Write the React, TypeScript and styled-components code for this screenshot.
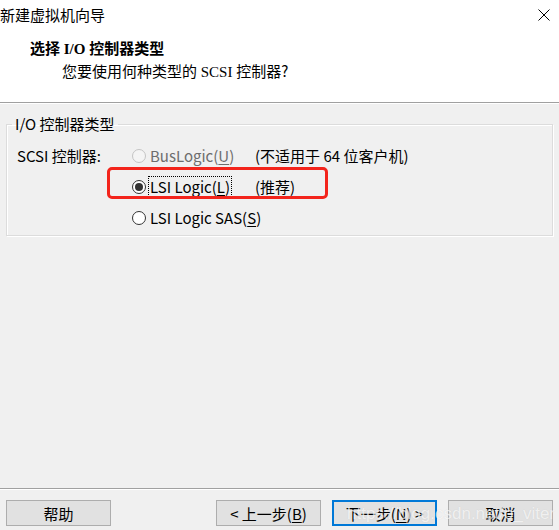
import React from 'react';
import styled, { createGlobalStyle } from 'styled-components';

const GlobalStyle = createGlobalStyle`
  html, body {
    margin: 0;
    padding: 0;
    background: #f0f0f0;
  }
  body {
    font-family: 'Noto Sans CJK SC', 'Noto Sans', sans-serif;
    font-size: 15px;
    color: #000;
  }
`;

const Window = styled.div`
  width: 559px;
  height: 530px;
  background: #f0f0f0;
  display: flex;
  flex-direction: column;
  overflow: hidden;
  position: relative;
`;

const Header = styled.header`
  background: #fff;
  height: 102px;
  border-bottom: 1px solid #a0a0a0;
  box-shadow: 0 1px 0 #fff;
  display: flex;
  flex-direction: column;
`;

const TitleBar = styled.div`
  height: 30px;
  display: flex;
  align-items: center;
  justify-content: space-between;
  padding: 0 9px 0 0;
  line-height: 20px;
`;

const CloseButton = styled.div`
  width: 12px;
  height: 12px;
  display: flex;
  svg {
    display: block;
  }
`;

const HeaderTitle = styled.div`
  margin: 9px 0 0 30px;
  font-family: 'Liberation Serif', 'Noto Sans CJK SC', serif;
  font-weight: 700;
  font-size: 15px;
  line-height: 20px;
`;

const HeaderSub = styled.div`
  margin: 2px 0 0 62px;
  font-family: 'Liberation Serif', 'Noto Sans CJK SC', serif;
  font-size: 15px;
  line-height: 20px;
  span {
    font-family: 'Noto Sans CJK SC', sans-serif;
  }
`;

const Content = styled.main`
  flex: 1;
  padding: 11px 6px 0 6px;
`;

const GroupBox = styled.fieldset`
  margin: 0;
  padding: 6px 0 2px 10px;
  border: 1px solid #dcdcdc;
  box-shadow: inset 1px 1px 0 #fff, 1px 1px 0 #fff;
  min-width: 0;
`;

const Legend = styled.legend`
  margin-left: -5px;
  padding: 0 3px;
  line-height: 20px;
`;

const Row = styled.div`
  position: relative;
  display: flex;
  align-items: center;
  height: 31px;
`;

const FieldLabel = styled.div`
  width: 115px;
  flex-shrink: 0;
`;

const Option = styled.div<{ $disabled?: boolean; $focused?: boolean }>`
  width: 123px;
  flex-shrink: 0;
  display: flex;
  align-items: center;
  color: ${p => (p.$disabled ? '#6d6d6d' : '#000')};
  label {
    margin-left: 3px;
    padding: 0 1px;
    line-height: 19px;
    outline: ${p => (p.$focused ? '1px dotted #000' : 'none')};
    white-space: nowrap;
  }
  u {
    text-underline-offset: 2px;
  }
`;

const RadioCircle = styled.span<{ $checked?: boolean; $disabled?: boolean }>`
  width: 12px;
  height: 12px;
  border-radius: 50%;
  border: 1px solid ${p => (p.$disabled ? '#c4c4c4' : '#333')};
  background: ${p => (p.$disabled ? '#f4f4f4' : '#fff')};
  display: flex;
  align-items: center;
  justify-content: center;
  flex-shrink: 0;
  &::after {
    content: '';
    display: ${p => (p.$checked ? 'block' : 'none')};
    width: 8px;
    height: 8px;
    border-radius: 50%;
    background: #333;
  }
`;

const Note = styled.div`
  white-space: nowrap;
`;

const Highlight = styled.div`
  position: absolute;
  left: 90px;
  top: -4px;
  width: 221px;
  height: 32px;
  box-sizing: border-box;
  border: 3px solid #f3241b;
  border-radius: 5px;
  pointer-events: none;
`;

const Footer = styled.footer`
  border-top: 1px solid #a0a0a0;
  box-shadow: inset 0 1px 0 #fff;
  height: 42px;
  padding: 11px 6px 0 6px;
  box-sizing: border-box;
  display: flex;
  gap: 11px;
`;

const Spacer = styled.div`
  flex: 1;
`;

const Button = styled.div<{ $default?: boolean }>`
  width: 105px;
  height: 26px;
  box-sizing: border-box;
  background: #e1e1e1;
  border: ${p => (p.$default ? '2px solid #0078d7' : '1px solid #adadad')};
  display: flex;
  align-items: center;
  justify-content: center;
  font-size: 15px;
  white-space: nowrap;
  u {
    text-underline-offset: 2px;
  }
`;

const Watermark = styled.div`
  position: absolute;
  right: 4px;
  bottom: 6px;
  font-family: 'Liberation Sans', Arial, sans-serif;
  font-size: 17px;
  color: rgba(255, 255, 255, 0.7);
  text-shadow: 0 0 1px rgba(120, 120, 120, 0.2);
  pointer-events: none;
  white-space: nowrap;
`;

export default function App() {
  return (
    <Window>
      <GlobalStyle />
      <Header>
        <TitleBar>
          <span>新建虚拟机向导</span>
          <CloseButton>
            <svg width="12" height="12" viewBox="0 0 12 12">
              <path d="M0.5 0.5 L11.5 11.5 M11.5 0.5 L0.5 11.5" stroke="#000" strokeWidth="1" fill="none" />
            </svg>
          </CloseButton>
        </TitleBar>
        <HeaderTitle>选择 I/O 控制器类型</HeaderTitle>
        <HeaderSub>
          您要使用何种类型的 SCSI 控制器<span>?</span>
        </HeaderSub>
      </Header>
      <Content>
        <GroupBox>
          <Legend>I/O 控制器类型</Legend>
          <Row>
            <FieldLabel>SCSI 控制器:</FieldLabel>
            <Option $disabled>
              <RadioCircle $disabled />
              <label>
                BusLogic(<u>U</u>)
              </label>
            </Option>
            <Note>(不适用于 64 位客户机)</Note>
          </Row>
          <Row>
            <FieldLabel />
            <Option $focused>
              <RadioCircle $checked />
              <label>
                LSI Logic(<u>L</u>)
              </label>
            </Option>
            <Note>(推荐)</Note>
            <Highlight />
          </Row>
          <Row>
            <FieldLabel />
            <Option>
              <RadioCircle />
              <label>
                LSI Logic SAS(<u>S</u>)
              </label>
            </Option>
          </Row>
        </GroupBox>
      </Content>
      <Footer>
        <Button>帮助</Button>
        <Spacer />
        <Button>
          &lt; 上一步(<u>B</u>)
        </Button>
        <Button $default>
          下一步(<u>N</u>) &gt;
        </Button>
        <Button>取消</Button>
      </Footer>
      <Watermark>https://blog.csdn.net/o_viter</Watermark>
    </Window>
  );
}
